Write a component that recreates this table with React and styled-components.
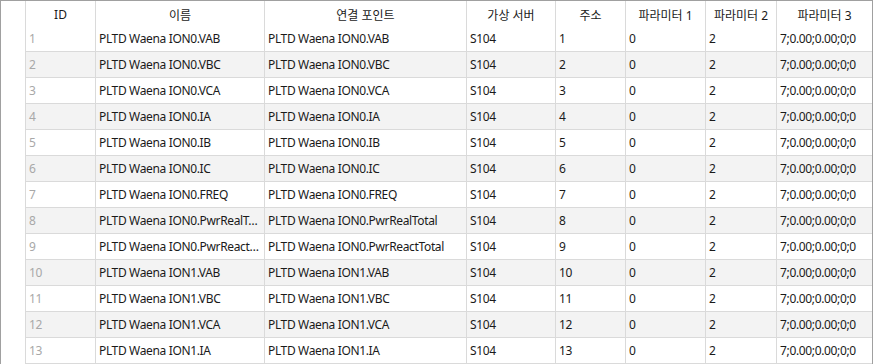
import React from "react";
import styled, { createGlobalStyle } from "styled-components";

const GlobalStyle = createGlobalStyle`
  html, body {
    margin: 0;
    padding: 0;
    background: #ffffff;
  }
  body {
    font-family: "Noto Sans", "Noto Sans CJK KR", sans-serif;
    font-size: 12px;
    letter-spacing: -0.35px;
    color: #1a1a1a;
  }
`;

const COLS = "24px 70px 169px 202px 89px 70px 80px 71px 96px";

const columns = ["ID", "이름", "연결 포인트", "가상 서버", "주소", "파라미터 1", "파라미터 2", "파라미터 3"];

const points = [
  "VAB", "VBC", "VCA", "IA", "IB", "IC", "FREQ", "PwrRealTotal", "PwrReactTotal",
];

const rows = [
  ...points.map((p, i) => ({ id: i + 1, name: `PLTD Waena ION0.${p}`, addr: i + 1 })),
  ...["VAB", "VBC", "VCA", "IA"].map((p, i) => ({
    id: i + 10,
    name: `PLTD Waena ION1.${p}`,
    addr: i + 10,
  })),
];

function App() {
  return (
    <>
      <GlobalStyle />
      <Grid>
        <HeaderRow>
          <Corner />
          {columns.map((c) => (
            <HeadCell key={c}>{c}</HeadCell>
          ))}
        </HeaderRow>
        {rows.map((r, i) => (
          <Row key={r.id}>
            <Corner />
            <Cell $striped={i % 2 === 1} $muted>{r.id}</Cell>
            <Cell $striped={i % 2 === 1}>{r.name}</Cell>
            <Cell $striped={i % 2 === 1}>{r.name}</Cell>
            <Cell $striped={i % 2 === 1}>S104</Cell>
            <Cell $striped={i % 2 === 1}>{r.addr}</Cell>
            <Cell $striped={i % 2 === 1}>0</Cell>
            <Cell $striped={i % 2 === 1}>2</Cell>
            <Cell $striped={i % 2 === 1}>7;0.00;0.00;0;0</Cell>
          </Row>
        ))}
      </Grid>
    </>
  );
}

const Grid = styled.div`
  width: 873px;
  height: 364px;
  box-sizing: border-box;
  border: 1px solid #a0a0a0;
  border-bottom: none;
  overflow: hidden;
  background: #ffffff;
`;

const HeaderRow = styled.div`
  display: grid;
  grid-template-columns: ${COLS};
  height: 25px;
`;

const Row = styled.div`
  display: grid;
  grid-template-columns: ${COLS};
  height: 26px;
`;

const Corner = styled.div`
  background: #ffffff;
`;

const HeadCell = styled.div`
  border-left: 1px solid #dadada;
  display: flex;
  align-items: center;
  justify-content: center;
  white-space: nowrap;
  overflow: hidden;
  color: #1a1a1a;
  letter-spacing: 0;
  padding-top: 2px;
`;

const Cell = styled.div`
  border-left: 1px solid #dadada;
  border-bottom: 1px solid #dadada;
  background: ${(p) => (p.$striped ? "#f3f3f3" : "#ffffff")};
  color: ${(p) => (p.$muted ? "#a8a8a8" : "#1a1a1a")};
  padding: 0 4px 0 3px;
  line-height: 25px;
  white-space: nowrap;
  overflow: hidden;
  text-overflow: ellipsis;
`;

export default App;
